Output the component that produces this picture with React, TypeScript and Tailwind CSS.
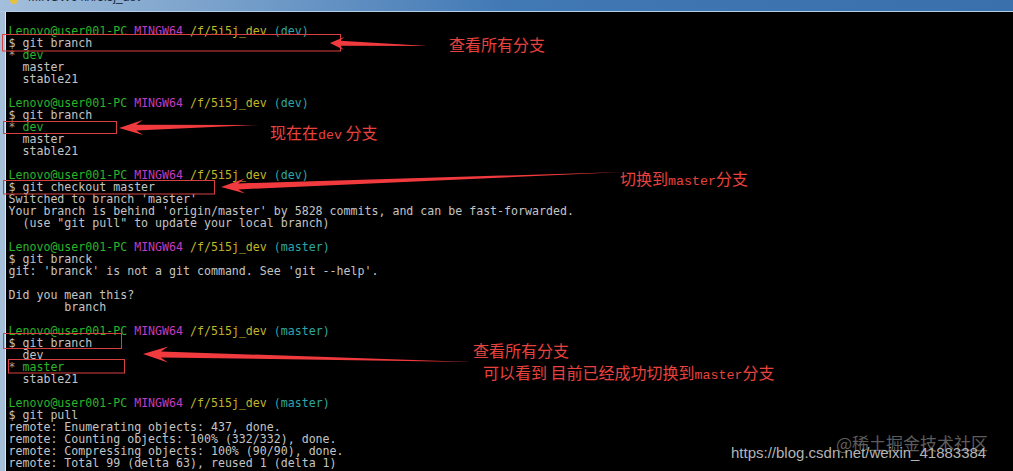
import React from 'react';

type Line =
  | { kind: 'prompt'; branch: string }
  | { kind: 'text'; text: string }
  | { kind: 'current'; name: string };

const lines: Line[] = [
  { kind: 'prompt', branch: 'dev' },
  { kind: 'text', text: '$ git branch' },
  { kind: 'current', name: 'dev' },
  { kind: 'text', text: '  master' },
  { kind: 'text', text: '  stable21' },
  { kind: 'text', text: '' },
  { kind: 'prompt', branch: 'dev' },
  { kind: 'text', text: '$ git branch' },
  { kind: 'current', name: 'dev' },
  { kind: 'text', text: '  master' },
  { kind: 'text', text: '  stable21' },
  { kind: 'text', text: '' },
  { kind: 'prompt', branch: 'dev' },
  { kind: 'text', text: '$ git checkout master' },
  { kind: 'text', text: "Switched to branch 'master'" },
  { kind: 'text', text: "Your branch is behind 'origin/master' by 5828 commits, and can be fast-forwarded." },
  { kind: 'text', text: '  (use "git pull" to update your local branch)' },
  { kind: 'text', text: '' },
  { kind: 'prompt', branch: 'master' },
  { kind: 'text', text: '$ git branck' },
  { kind: 'text', text: "git: 'branck' is not a git command. See 'git --help'." },
  { kind: 'text', text: '' },
  { kind: 'text', text: 'Did you mean this?' },
  { kind: 'text', text: '        branch' },
  { kind: 'text', text: '' },
  { kind: 'prompt', branch: 'master' },
  { kind: 'text', text: '$ git branch' },
  { kind: 'text', text: '  dev' },
  { kind: 'current', name: 'master' },
  { kind: 'text', text: '  stable21' },
  { kind: 'text', text: '' },
  { kind: 'prompt', branch: 'master' },
  { kind: 'text', text: '$ git pull' },
  { kind: 'text', text: 'remote: Enumerating objects: 437, done.' },
  { kind: 'text', text: 'remote: Counting objects: 100% (332/332), done.' },
  { kind: 'text', text: 'remote: Compressing objects: 100% (90/90), done.' },
  { kind: 'text', text: 'remote: Total 99 (delta 63), reused 1 (delta 1)' },
];

// tapered red annotation arrow, tail -> tip
function arrowPoints(tx: number, ty: number, hx: number, hy: number, headLen: number, headW: number, shaftW: number) {
  const dx = hx - tx;
  const dy = hy - ty;
  const len = Math.hypot(dx, dy);
  const ux = dx / len;
  const uy = dy / len;
  const nx = -uy;
  const ny = ux;
  const bx = hx - ux * headLen;
  const by = hy - uy * headLen;
  const jx = hx - ux * headLen * 0.72;
  const jy = hy - uy * headLen * 0.72;
  const pts = [
    [tx, ty],
    [jx + nx * shaftW, jy + ny * shaftW],
    [bx + nx * headW, by + ny * headW],
    [hx, hy],
    [bx - nx * headW, by - ny * headW],
    [jx - nx * shaftW, jy - ny * shaftW],
  ];
  return pts.map((p) => `${p[0].toFixed(1)},${p[1].toFixed(1)}`).join(' ');
}

const arrows = [
  arrowPoints(428, 46, 330, 43, 14, 6.5, 2.5),
  arrowPoints(258, 125, 119, 128, 24, 7.5, 2.8),
  arrowPoints(624, 172, 221, 187, 24, 7.5, 3),
  arrowPoints(472, 362, 143, 354, 25, 8, 3),
];

const boxes = [
  { x: 2.5, y: 34.5, w: 338, h: 16.5 },
  { x: 3.5, y: 121.5, w: 113, h: 12 },
  { x: 3.5, y: 180.5, w: 211, h: 13.5 },
  { x: 3.5, y: 333.5, w: 118, h: 15 },
  { x: 8.5, y: 359.5, w: 116, h: 13.5 },
];

function Prompt({ branch }: { branch: string }) {
  return (
    <>
      <span className="text-[#2bb52b]">Lenovo@user001-PC</span>{' '}
      <span className="text-[#c03cc0]">MINGW64</span>{' '}
      <span className="text-[#c0b82a]">/f/5i5j_dev</span>{' '}
      <span className="text-[#2ea6a6]">({branch})</span>
    </>
  );
}

function Mono({ children }: { children: React.ReactNode }) {
  return <span className="font-['Liberation_Mono',monospace] text-[13.3px]">{children}</span>;
}

export default function App() {
  return (
    <div className="relative w-[1013px] h-[471px] overflow-hidden bg-black flex flex-col">
      {/* window title bar, mostly cropped */}
      <div className="h-[11px] overflow-hidden bg-gradient-to-r from-[#a3bfdb] via-[#4179b5] to-[#3a70ac] flex items-start pl-[10px] gap-[10px]">
        <div className="w-[8px] h-[5px] -mt-[1px] rounded-b-sm bg-[#e8c040]" />
        <div className="-mt-[9px] text-[12px] leading-[12px] text-[#1b2a3a] font-['Liberation_Sans',sans-serif]">
          MINGW64:/f/5i5j_dev
        </div>
      </div>
      <div className="h-px bg-[#b4cde6]" />
      <div className="flex-1 flex">
        <div className="w-[5px] bg-[#a6bfd8]" />
        <div className="w-px bg-[#dce8f3]" />
        <div className="flex-1 pt-[13px] pl-[2.5px] font-['DejaVu_Sans_Mono',monospace] text-[11.6px] leading-[12px] text-[#c4c4c4] whitespace-pre">
          {lines.map((l, i) => (
            <div key={i} className="h-[12px]">
              {l.kind === 'prompt' && <Prompt branch={l.branch} />}
              {l.kind === 'text' && l.text}
              {l.kind === 'current' && (
                <>
                  <span className="text-[#a0a0a0]">* </span>
                  <span className="text-[#2bb52b]">{l.name}</span>
                </>
              )}
            </div>
          ))}
        </div>
      </div>

      {/* red annotations drawn over the terminal */}
      <svg className="absolute top-0 left-0 pointer-events-none" width={1013} height={471}>
        {boxes.map((b, i) => (
          <rect key={i} x={b.x} y={b.y} width={b.w} height={b.h} fill="none" stroke="#d8403f" strokeWidth={1} />
        ))}
        {arrows.map((p, i) => (
          <polygon key={i} points={p} fill="#f03a3e" />
        ))}
      </svg>

      <div className="absolute inset-0 pointer-events-none font-['Noto_Sans_CJK_SC',sans-serif] text-[16px] leading-[16px] text-[#e8423f] whitespace-pre">
        <div className="absolute left-[449px] top-[36px]">查看所有分支</div>
        <div className="absolute left-[270px] top-[124px]">现在在<Mono>dev</Mono> 分支</div>
        <div className="absolute left-[620px] top-[170px]">切换到<Mono>master</Mono>分支</div>
        <div className="absolute left-[473px] top-[342px]">查看所有分支</div>
        <div className="absolute left-[483px] top-[364px]">可以看到 目前已经成功切换到<Mono>master</Mono>分支</div>
      </div>

      {/* watermarks */}
      <div className="absolute left-[836px] top-[433px] text-[17px] leading-[20px] text-[#9a9a9a] opacity-60 font-['Noto_Sans_CJK_SC',sans-serif] whitespace-nowrap">
        @稀土掘金技术社区
      </div>
      <div className="absolute left-[731px] top-[444px] text-[15px] leading-[18px] text-[#b4b4b4] font-['Liberation_Sans',sans-serif] whitespace-nowrap">
        https://blog.csdn.net/weixin_41883384
      </div>
    </div>
  );
}
